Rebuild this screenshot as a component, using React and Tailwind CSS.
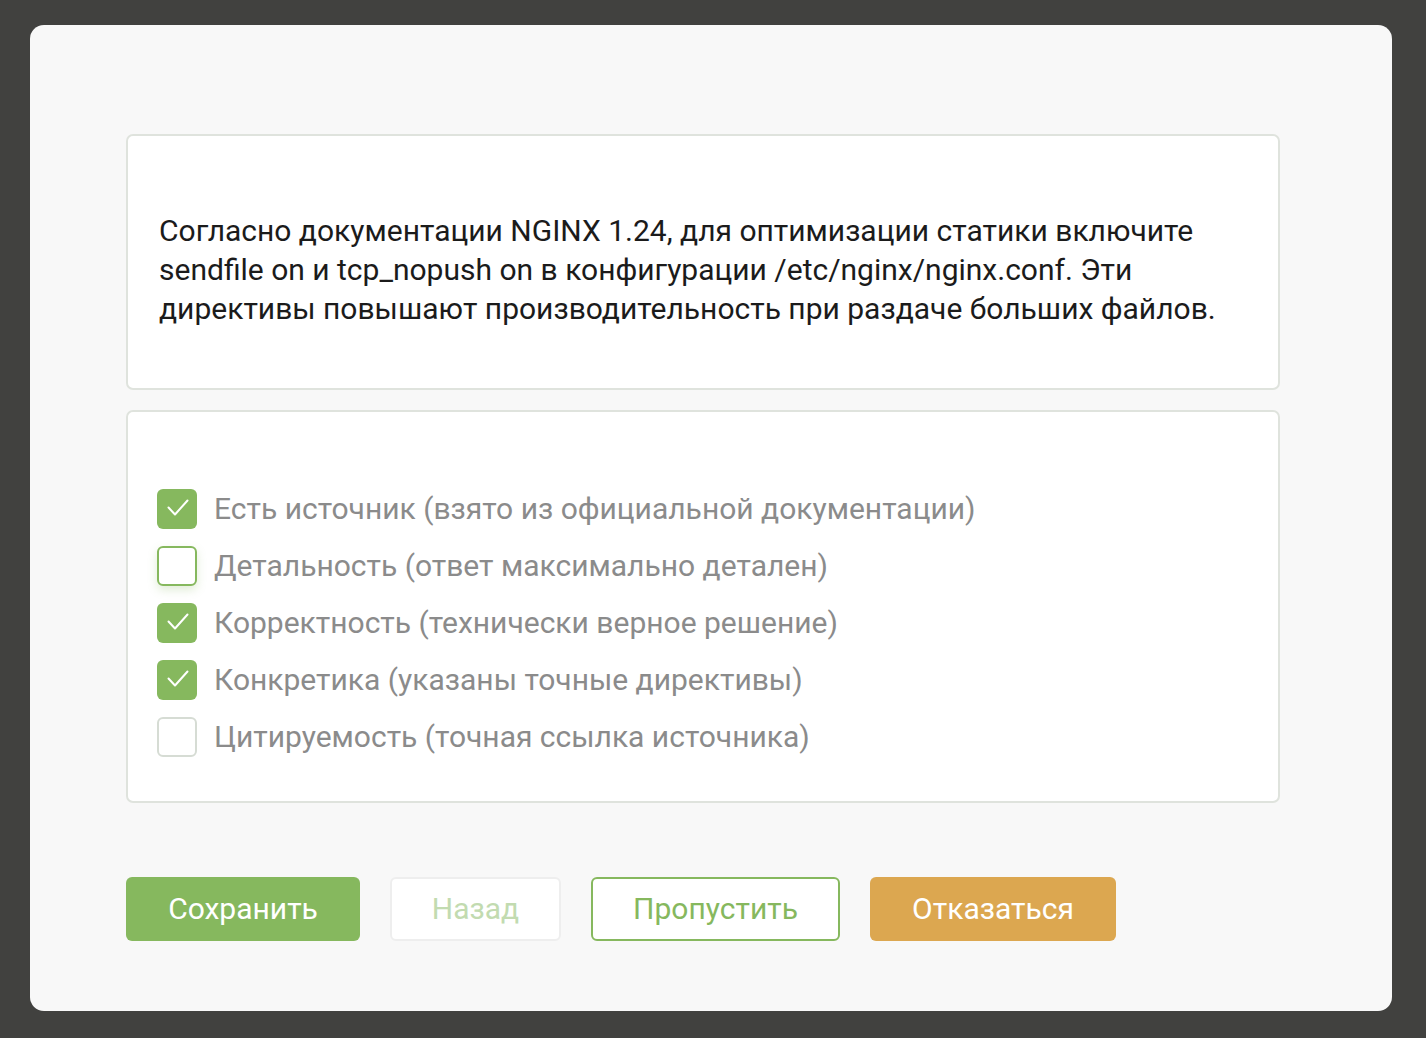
import React from "react";

const items = [
  { label: "Есть источник (взято из официальной документации)", state: "checked" },
  { label: "Детальность (ответ максимально детален)", state: "focus" },
  { label: "Корректность (технически верное решение)", state: "checked" },
  { label: "Конкретика (указаны точные директивы)", state: "checked" },
  { label: "Цитируемость (точная ссылка источника)", state: "empty" },
];

function Box({ state }) {
  if (state === "checked") {
    return (
      <span className="flex h-[40px] w-[40px] shrink-0 items-center justify-center rounded-[6px] bg-[#86b85e]">
        <svg width="26" height="26" viewBox="0 0 26 26" fill="none">
          <path d="M4.5 11.5 L11 18.5 L23.5 4.5" stroke="#ffffff" strokeWidth="2" strokeLinecap="round" strokeLinejoin="round" />
        </svg>
      </span>
    );
  }
  if (state === "focus") {
    return (
      <span className="h-[40px] w-[40px] shrink-0 rounded-[6px] border-2 border-[#86b85e] bg-white shadow-[0_4px_10px_rgba(134,184,94,0.25)]" />
    );
  }
  return <span className="h-[40px] w-[40px] shrink-0 rounded-[6px] border-2 border-[#d6dcd4] bg-white" />;
}

export default function App() {
  return (
    <div className="min-h-[1038px] w-full bg-[#41413f] px-[30px] pt-[25px] pb-[27px] font-['Roboto',sans-serif]">
      <div className="w-[1362px] rounded-[14px] bg-[#f8f8f8] pl-[96px] pr-[112px] pt-[109px] pb-[70px]">
        <div className="rounded-[7px] border-2 border-[#dfe3dd] bg-white pl-[31px] pr-[20px] pt-[75px] pb-[60px]">
          <p className="text-[30px] leading-[39px] text-[#1b1b1b]">
            Согласно документации NGINX 1.24, для оптимизации статики включите sendfile on и tcp_nopush on в конфигурации /etc/nginx/nginx.conf. Эти директивы повышают производительность при раздаче больших файлов.
          </p>
        </div>
        <div className="mt-[20px] rounded-[7px] border-2 border-[#dfe3dd] bg-white pl-[29px] pt-[68px] pb-[36px]">
          {items.map((it) => (
            <div key={it.label} className="flex h-[57px] items-center gap-[17px]">
              <Box state={it.state} />
              <span className="text-[30px] leading-[40px] text-[#8b8b8b]">{it.label}</span>
            </div>
          ))}
        </div>
        <div className="mt-[74px] flex gap-[30px]">
          <button className="h-[64px] w-[234px] rounded-[6px] bg-[#86b85e] pb-[2px] text-[30px] text-white">Сохранить</button>
          <button className="h-[64px] w-[171px] rounded-[6px] border-2 border-[#eeeeee] bg-white pb-[2px] text-[30px] text-[#c2dbb0]">Назад</button>
          <button className="h-[64px] w-[249px] rounded-[6px] border-2 border-[#86b85e] bg-white pb-[2px] text-[30px] text-[#86b85e]">Пропустить</button>
          <button className="h-[64px] w-[246px] rounded-[6px] bg-[#dca750] pb-[2px] text-[30px] text-white">Отказаться</button>
        </div>
      </div>
    </div>
  );
}
